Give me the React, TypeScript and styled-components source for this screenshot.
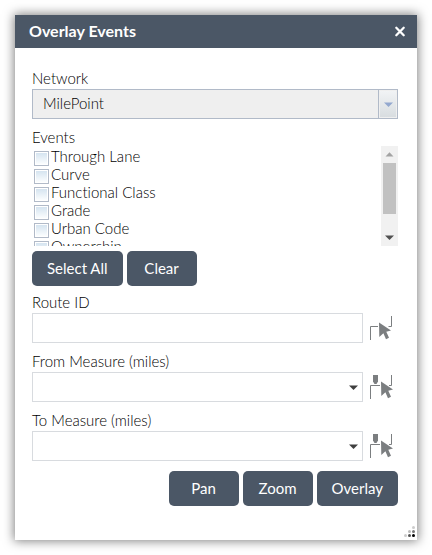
import React, { useState } from "react";
import styled, { createGlobalStyle, css } from "styled-components";

const slate = "#4b5766";

const GlobalStyle = createGlobalStyle`
  *, *::before, *::after { box-sizing: border-box; }
  body {
    margin: 0;
    background: #fff;
    color: #000;
    font: 300 15px/18px Lato, "Open Sans", sans-serif;
    font-variant-ligatures: none;
  }
  button, input, select { font: inherit; color: inherit; margin: 0; }
`;

const Page = styled.main`
  min-height: 100vh;
  padding: 15px;
  display: flex;
`;

const Dialog = styled.section`
  flex: 1;
  display: flex;
  flex-direction: column;
  background: #fff;
  box-shadow: 0 0 10px 1px rgba(0, 0, 0, 0.5);
`;

const Header = styled.header`
  display: flex;
  align-items: center;
  justify-content: space-between;
  height: 33px;
  padding: 0 11px 0 14px;
  background: ${slate};
  color: #fff;
`;

const Title = styled.h1`
  margin: 0;
  padding-bottom: 2px;
  font-size: 16px;
  line-height: 20px;
  font-weight: 700;
`;

const CloseButton = styled.button`
  display: flex;
  padding: 0;
  border: 0;
  background: none;
  cursor: pointer;
`;

const Form = styled.form`
  flex: 1;
  display: flex;
  flex-direction: column;
  gap: 8px;
  padding: 20px 19px 0 17px;
`;

const Field = styled.div`
  display: flex;
  flex-direction: column;
  gap: 1px;
`;

const Label = styled.label`
  font-size: 15px;
  line-height: 20px;
`;

const EventSet = styled.fieldset`
  margin: 0;
  padding: 0;
  border: 0;
  min-width: 0;
`;

const Legend = styled.legend`
  padding: 1px 0 0;
  font-size: 15px;
  line-height: 18px;
`;

const EventPanel = styled.div`
  display: flex;
  height: 100px;
`;

const EventList = styled.ul`
  flex: 1;
  margin: 0;
  padding: 1px 0 20px;
  list-style: none;
  overflow-y: auto;
  scrollbar-width: none;
`;

const EventRow = styled.li`
  display: flex;
  align-items: center;
  height: 18px;
  padding-left: 2px;
`;

const EventLabel = styled.label`
  display: flex;
  align-items: center;
  gap: 2px;
  font-size: 15px;
  line-height: 18px;
`;

const Check = styled.input`
  appearance: none;
  width: 15px;
  height: 15px;
  && { margin-top: 4px; }
  border: 1px solid #b1bac8;
  background: linear-gradient(#d5e4f0, #fbfdfe) content-box #fff;
  padding: 1px;
  &:checked { background: ${slate} content-box; }
`;

const Scrollbar = styled.div`
  display: flex;
  flex-direction: column;
  width: 17px;
  background: #f1f1f1;
`;

const ScrollArrow = styled.button`
  display: flex;
  align-items: center;
  justify-content: center;
  height: 17px;
  padding: 0;
  border: 0;
  background: none;
`;

const Track = styled.div`
  flex: 1;
  padding: 0 2px;
`;

const Thumb = styled.div`
  height: 51px;
  background: #c1c1c1;
`;

const ButtonRow = styled.div<{ $end?: boolean }>`
  display: flex;
  gap: 4px;
  margin-top: ${(p) => (p.$end ? "2px" : "-3px")};
  margin-bottom: ${(p) => (p.$end ? "0" : "-2px")};
  justify-content: ${(p) => (p.$end ? "flex-end" : "flex-start")};
`;

const Button = styled.button`
  min-width: 70px;
  height: 35px;
  padding: 0 15px 2px;
  border: 0;
  border-radius: 5px;
  background: ${slate};
  color: #fff;
  font-size: 15px;
  font-weight: 400;
  cursor: pointer;
`;

const ControlRow = styled.div`
  display: flex;
  align-items: center;
  gap: 6px;
`;

const box = css`
  flex: 1;
  min-width: 0;
  width: 100%;
  height: 30px;
  padding: 0 10px;
  border: 1px solid #d8dbdf;
  border-radius: 0;
  background: #fff;
  appearance: none;
`;

const TextBox = styled.input`${box}`;

const SelectWrap = styled.div`
  flex: 1;
  display: grid;
  align-items: center;
  > * { grid-area: 1 / 1; }
  > svg { justify-self: end; margin-right: 5px; pointer-events: none; }
`;

const SelectBox = styled.select<{ $muted?: boolean }>`
  ${box}
  ${(p) =>
    p.$muted &&
    css`
      padding-bottom: 3px;
      border-color: #b1bac8;
      background: #efefef;
      opacity: 1;
      color: #000;
    `}
`;

const DropTab = styled.span`
  justify-self: end;
  display: flex;
  align-items: center;
  justify-content: center;
  width: 20px;
  height: 30px;
  border: 1px solid #b1bac8;
  padding: 1px;
  background: linear-gradient(#f1f3f5, #d8dde0) content-box #fff;
  pointer-events: none;
`;

const PickButton = styled.button`
  display: flex;
  padding: 0;
  border: 0;
  background: none;
  width: 29px;
  height: 28px;
  cursor: pointer;
`;

const Grip = styled.div`
  display: flex;
  justify-content: flex-end;
  padding: 0 1px 2px 0;
`;

const CloseIcon = () => (
  <svg width="12" height="12" viewBox="0 0 12 12" aria-hidden="true">
    <path d="M2.3 1.8 9.7 9.2M9.7 1.8 2.3 9.2" stroke="#fff" strokeWidth="2.3" strokeLinecap="round" />
  </svg>
);

const Triangle = ({ fill, up = false }: { fill: string; up?: boolean }) => (
  <svg width="9" height="5" viewBox="0 0 9 5" aria-hidden="true">
    <path d={up ? "M.5 4.5 4.5 .3 8.5 4.5z" : "M0 .5 4.5 5 9 .5z"} fill={fill} />
  </svg>
);

const PickIcon = ({ marker = false }: { marker?: boolean }) => (
  <svg width="29" height="28" viewBox="0 0 29 28" aria-hidden="true">
    <path
      d={marker ? "M1.5 26V12.5H11M20 12.5H22.5V2" : "M1.5 26V12.5H9M19.5 12.5H22.5V2"}
      fill="none"
      stroke="#7b7e80"
    />
    {marker && <path d="M4 2H9V8.5L7.5 11H5.5L4 8.5z" fill="#7b7e80" />}
    <path
      transform={marker ? "translate(2 0)" : undefined}
      d="M10 8.5 22 16.5 17.3 17.8 20 23.8 17 25.2 14.4 19.2 10.3 23z"
      fill="#7b7e80"
    />
  </svg>
);

const GripIcon = () => (
  <svg width="12" height="12" viewBox="0 0 12 12" aria-hidden="true">
    <circle cx="9.5" cy="1.5" r="1.5" fill="#ccc" />
    <circle cx="5.5" cy="5.5" r="1.5" fill="#bbb" />
    <circle cx="9.5" cy="5.5" r="1.5" fill="#777" />
    <circle cx="1.5" cy="9.5" r="1.5" fill="#ccc" />
    <circle cx="5.5" cy="9.5" r="1.5" fill="#555" />
    <circle cx="9.5" cy="9.5" r="1.5" fill="#000" />
  </svg>
);

const events = ["Through Lane", "Curve", "Functional Class", "Grade", "Urban Code", "Ownership"];

const MeasureField = ({ id, label }: { id: string; label: string }) => (
  <Field>
    <Label htmlFor={id}>{label}</Label>
    <ControlRow>
      <SelectWrap>
        <SelectBox id={id} />
        <Triangle fill="#3f3f3f" />
      </SelectWrap>
      <PickButton type="button" aria-label={`Pick ${label} on map`}>
        <PickIcon marker />
      </PickButton>
    </ControlRow>
  </Field>
);

const EventPicker = () => {
  const [shift, setShift] = useState(0);
  const list = React.useRef<HTMLUListElement>(null);
  const nudge = (by: number) => list.current?.scrollBy({ top: by });
  return (
    <EventSet>
      <Legend>Events</Legend>
      <EventPanel>
        <EventList
          ref={list}
          onScroll={(e) => {
            const el = e.currentTarget;
            setShift((el.scrollTop / (el.scrollHeight - el.clientHeight)) * 15);
          }}
        >
          {events.map((name) => (
            <EventRow key={name}>
              <EventLabel>
                <Check type="checkbox" />
                {name}
              </EventLabel>
            </EventRow>
          ))}
        </EventList>
        <Scrollbar>
          <ScrollArrow type="button" aria-label="Scroll up" onClick={() => nudge(-18)}>
            <Triangle fill="#a3a3a3" up />
          </ScrollArrow>
          <Track>
            <Thumb style={{ marginTop: shift }} />
          </Track>
          <ScrollArrow type="button" aria-label="Scroll down" onClick={() => nudge(18)}>
            <Triangle fill="#505050" />
          </ScrollArrow>
        </Scrollbar>
      </EventPanel>
    </EventSet>
  );
};

export default function App() {
  return (
    <Page>
      <GlobalStyle />
      <Dialog aria-labelledby="title">
        <Header>
          <Title id="title">Overlay Events</Title>
          <CloseButton type="button" aria-label="Close">
            <CloseIcon />
          </CloseButton>
        </Header>
        <Form>
          <Field>
            <Label htmlFor="network">Network</Label>
            <SelectWrap>
              <SelectBox id="network" $muted disabled>
                <option>MilePoint</option>
              </SelectBox>
              <DropTab>
                <Triangle fill="#93a8cf" />
              </DropTab>
            </SelectWrap>
          </Field>
          <EventPicker />
          <ButtonRow>
            <Button type="button">Select All</Button>
            <Button type="button">Clear</Button>
          </ButtonRow>
          <Field>
            <Label htmlFor="route">Route ID</Label>
            <ControlRow>
              <TextBox id="route" type="text" />
              <PickButton type="button" aria-label="Pick route on map">
                <PickIcon />
              </PickButton>
            </ControlRow>
          </Field>
          <MeasureField id="from" label="From Measure (miles)" />
          <MeasureField id="to" label="To Measure (miles)" />
          <ButtonRow $end>
            <Button type="button">Pan</Button>
            <Button type="button">Zoom</Button>
            <Button type="button">Overlay</Button>
          </ButtonRow>
        </Form>
        <Grip>
          <GripIcon />
        </Grip>
      </Dialog>
    </Page>
  );
}
